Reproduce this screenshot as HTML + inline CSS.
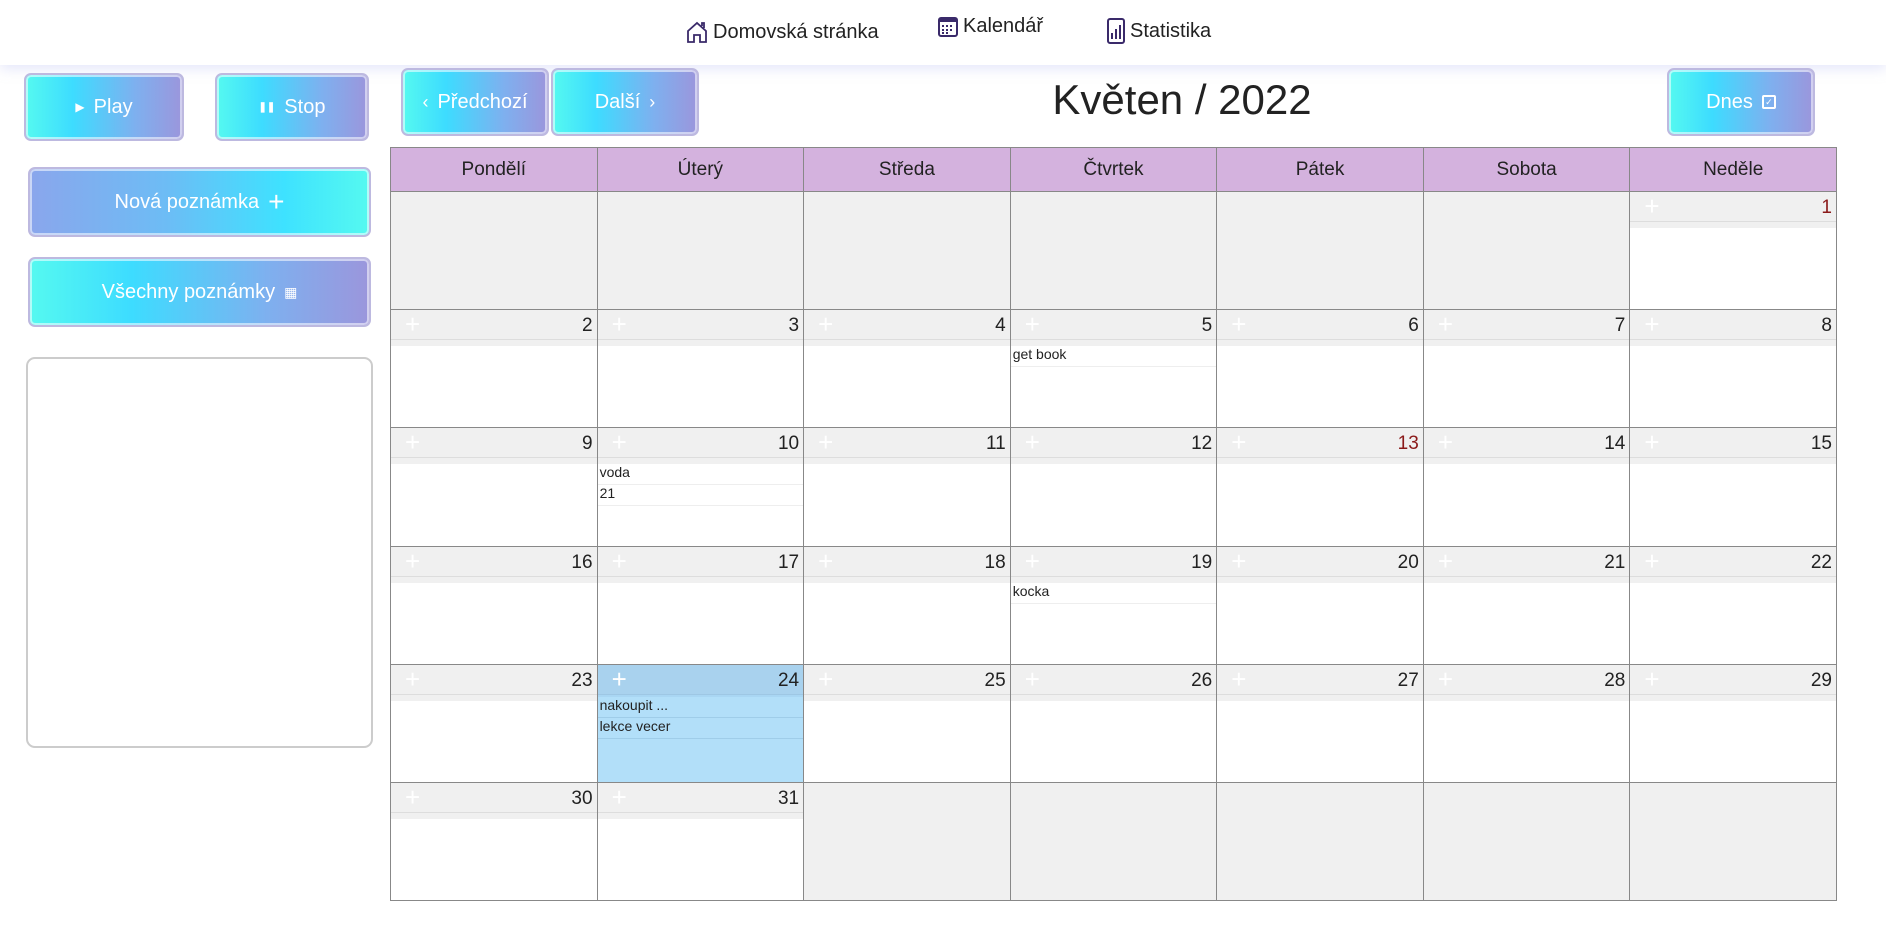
<!DOCTYPE html>
<html><head><meta charset="utf-8"><style>
*{box-sizing:border-box;margin:0;padding:0}
body{width:1886px;height:932px;background:#fff;font-family:"Liberation Sans",sans-serif;position:relative;overflow:hidden;color:#222}
.nav{position:absolute;left:0;top:0;width:1886px;height:65px;background:#fff;box-shadow:0 4px 12px rgba(180,185,240,.35)}
.nav .it{position:absolute;font-size:20px;color:#222;display:flex;align-items:center;gap:5px}
.btn{position:absolute;border:2px solid #bdb9e0;border-radius:7px;box-shadow:inset 0 0 0 2px rgba(255,255,255,.55);color:#fff;font-size:20px;display:flex;align-items:center;justify-content:center;gap:9px;background:linear-gradient(90deg,#55f9f0 0%,#3ddcff 30%,#7eb0ef 70%,#9b96dc 100%)}
.rev{background:linear-gradient(90deg,#8aa6ec 0%,#6dbcf5 40%,#3ee2ff 75%,#55f9f0 100%)}
.title{position:absolute;left:1182px;top:76px;transform:translateX(-50%);font-size:42px;color:#222;white-space:nowrap}
.box{position:absolute;left:26px;top:357px;width:347px;height:391px;border:2px solid #ccc;border-radius:9px}
.cal{position:absolute;left:390px;top:147px;width:1447px;height:754px;border:1px solid #888;border-collapse:collapse;table-layout:fixed}
.cal th{background:#d4b2de;height:44px;font-weight:normal;font-size:19px;border:1px solid #888;color:#222}
.cal td{border:1px solid #888;height:118px;vertical-align:top;background:#fff;padding:0}
.cal td.e{background:#f0f0f0}
.h{height:30px;background:#f0f0f0;border-bottom:1px solid #ddd;position:relative}
.h .p{position:absolute;left:14px;top:4px;color:#fff;font-size:26px;line-height:20px;font-weight:300}
.h .n{position:absolute;right:4px;top:5px;font-size:19px;color:#222}
.s{height:6px;background:#f0f0f0}
.note{height:21px;font-size:14px;line-height:16px;border-bottom:1px solid #eee;padding-left:2px;color:#222}
.t{background:#b2dff9!important}
.t .h{background:#a9d2ee;border-bottom-color:#9ec7e4}
.t .s{background:#a9d6f3}
.t .note{border-bottom-color:#9fcde9}
</style></head><body>
<div class="nav">
<div class="it" style="left:686px;top:20px"><svg width="22" height="24" viewBox="0 0 22 24" fill="none" stroke="#3a2a6a" stroke-width="1.8"><path d="M2 11 L11 3 L20 11 V22 H14 V15 H8 V22 H2 Z"/><path d="M16 6 V3 H18 V8"/></svg>Domovská stránka</div>
<div class="it" style="left:938px;top:15px"><svg width="20" height="22" viewBox="0 0 20 22"><rect x="1" y="2" width="18" height="18" rx="2" fill="none" stroke="#3a2a6a" stroke-width="2"/><rect x="1" y="2" width="18" height="4" fill="#3a2a6a"/><g fill="#3a2a6a"><rect x="4" y="9" width="2" height="2"/><rect x="8" y="9" width="2" height="2"/><rect x="12" y="9" width="2" height="2"/><rect x="4" y="13" width="2" height="2"/><rect x="8" y="13" width="2" height="2"/><rect x="12" y="13" width="2" height="2"/><rect x="4" y="16" width="2" height="2"/><rect x="8" y="16" width="2" height="2"/></g></svg>Kalendář</div>
<div class="it" style="left:1107px;top:18px"><svg width="18" height="26" viewBox="0 0 18 26"><rect x="1" y="1" width="16" height="24" rx="2" fill="none" stroke="#3a2a6a" stroke-width="2"/><g fill="#3a2a6a"><rect x="4" y="15" width="2" height="6"/><rect x="8" y="11" width="2" height="10"/><rect x="12" y="7" width="2" height="14"/></g></svg>Statistika</div>
</div>
<div class="btn" style="left:24px;top:73px;width:160px;height:68px"><span style="font-size:12px">▶</span> Play</div>
<div class="btn" style="left:215px;top:73px;width:154px;height:68px"><span style="font-size:10px;font-weight:bold">❚❚</span> Stop</div>
<div class="btn" style="left:401px;top:68px;width:148px;height:68px"><span style="font-size:18px">‹</span> Předchozí</div>
<div class="btn" style="left:551px;top:68px;width:148px;height:68px">Další <span style="font-size:18px">›</span></div>
<div class="title">Květen / 2022</div>
<div class="btn" style="left:1667px;top:68px;width:148px;height:68px">Dnes <span style="display:inline-block;width:14px;height:14px;border:2px solid #fff;border-radius:2px;font-size:9px;line-height:10px;text-align:center">✓</span></div>
<div class="btn rev" style="left:28px;top:167px;width:343px;height:70px">Nová poznámka <span style="font-size:28px;font-weight:300">+</span></div>
<div class="btn" style="left:28px;top:257px;width:343px;height:70px">Všechny poznámky <span style="font-size:14px">▦</span></div>
<div class="box"></div>
<table class="cal">
<tr><th>Pondělí</th><th>Úterý</th><th>Středa</th><th>Čtvrtek</th><th>Pátek</th><th>Sobota</th><th>Neděle</th></tr>
<tr><td class="e"></td><td class="e"></td><td class="e"></td><td class="e"></td><td class="e"></td><td class="e"></td><td><div class="h"><span class="p">+</span><span class="n" style="color:#8b1a1a">1</span></div><div class="s"></div></td></tr>
<tr><td><div class="h"><span class="p">+</span><span class="n">2</span></div><div class="s"></div></td><td><div class="h"><span class="p">+</span><span class="n">3</span></div><div class="s"></div></td><td><div class="h"><span class="p">+</span><span class="n">4</span></div><div class="s"></div></td><td><div class="h"><span class="p">+</span><span class="n">5</span></div><div class="s"></div><div class="note">get book</div></td><td><div class="h"><span class="p">+</span><span class="n">6</span></div><div class="s"></div></td><td><div class="h"><span class="p">+</span><span class="n">7</span></div><div class="s"></div></td><td><div class="h"><span class="p">+</span><span class="n">8</span></div><div class="s"></div></td></tr>
<tr><td><div class="h"><span class="p">+</span><span class="n">9</span></div><div class="s"></div></td><td><div class="h"><span class="p">+</span><span class="n">10</span></div><div class="s"></div><div class="note">voda</div><div class="note">21</div></td><td><div class="h"><span class="p">+</span><span class="n">11</span></div><div class="s"></div></td><td><div class="h"><span class="p">+</span><span class="n">12</span></div><div class="s"></div></td><td><div class="h"><span class="p">+</span><span class="n" style="color:#8b1a1a">13</span></div><div class="s"></div></td><td><div class="h"><span class="p">+</span><span class="n">14</span></div><div class="s"></div></td><td><div class="h"><span class="p">+</span><span class="n">15</span></div><div class="s"></div></td></tr>
<tr><td><div class="h"><span class="p">+</span><span class="n">16</span></div><div class="s"></div></td><td><div class="h"><span class="p">+</span><span class="n">17</span></div><div class="s"></div></td><td><div class="h"><span class="p">+</span><span class="n">18</span></div><div class="s"></div></td><td><div class="h"><span class="p">+</span><span class="n">19</span></div><div class="s"></div><div class="note">kocka</div></td><td><div class="h"><span class="p">+</span><span class="n">20</span></div><div class="s"></div></td><td><div class="h"><span class="p">+</span><span class="n">21</span></div><div class="s"></div></td><td><div class="h"><span class="p">+</span><span class="n">22</span></div><div class="s"></div></td></tr>
<tr><td><div class="h"><span class="p">+</span><span class="n">23</span></div><div class="s"></div></td><td class="t"><div class="h"><span class="p">+</span><span class="n">24</span></div><div class="s" style="height:2px"></div><div class="note">nakoupit ...</div><div class="note">lekce vecer</div></td><td><div class="h"><span class="p">+</span><span class="n">25</span></div><div class="s"></div></td><td><div class="h"><span class="p">+</span><span class="n">26</span></div><div class="s"></div></td><td><div class="h"><span class="p">+</span><span class="n">27</span></div><div class="s"></div></td><td><div class="h"><span class="p">+</span><span class="n">28</span></div><div class="s"></div></td><td><div class="h"><span class="p">+</span><span class="n">29</span></div><div class="s"></div></td></tr>
<tr><td><div class="h"><span class="p">+</span><span class="n">30</span></div><div class="s"></div></td><td><div class="h"><span class="p">+</span><span class="n">31</span></div><div class="s"></div></td><td class="e"></td><td class="e"></td><td class="e"></td><td class="e"></td><td class="e"></td></tr>
</table>
</body></html>
